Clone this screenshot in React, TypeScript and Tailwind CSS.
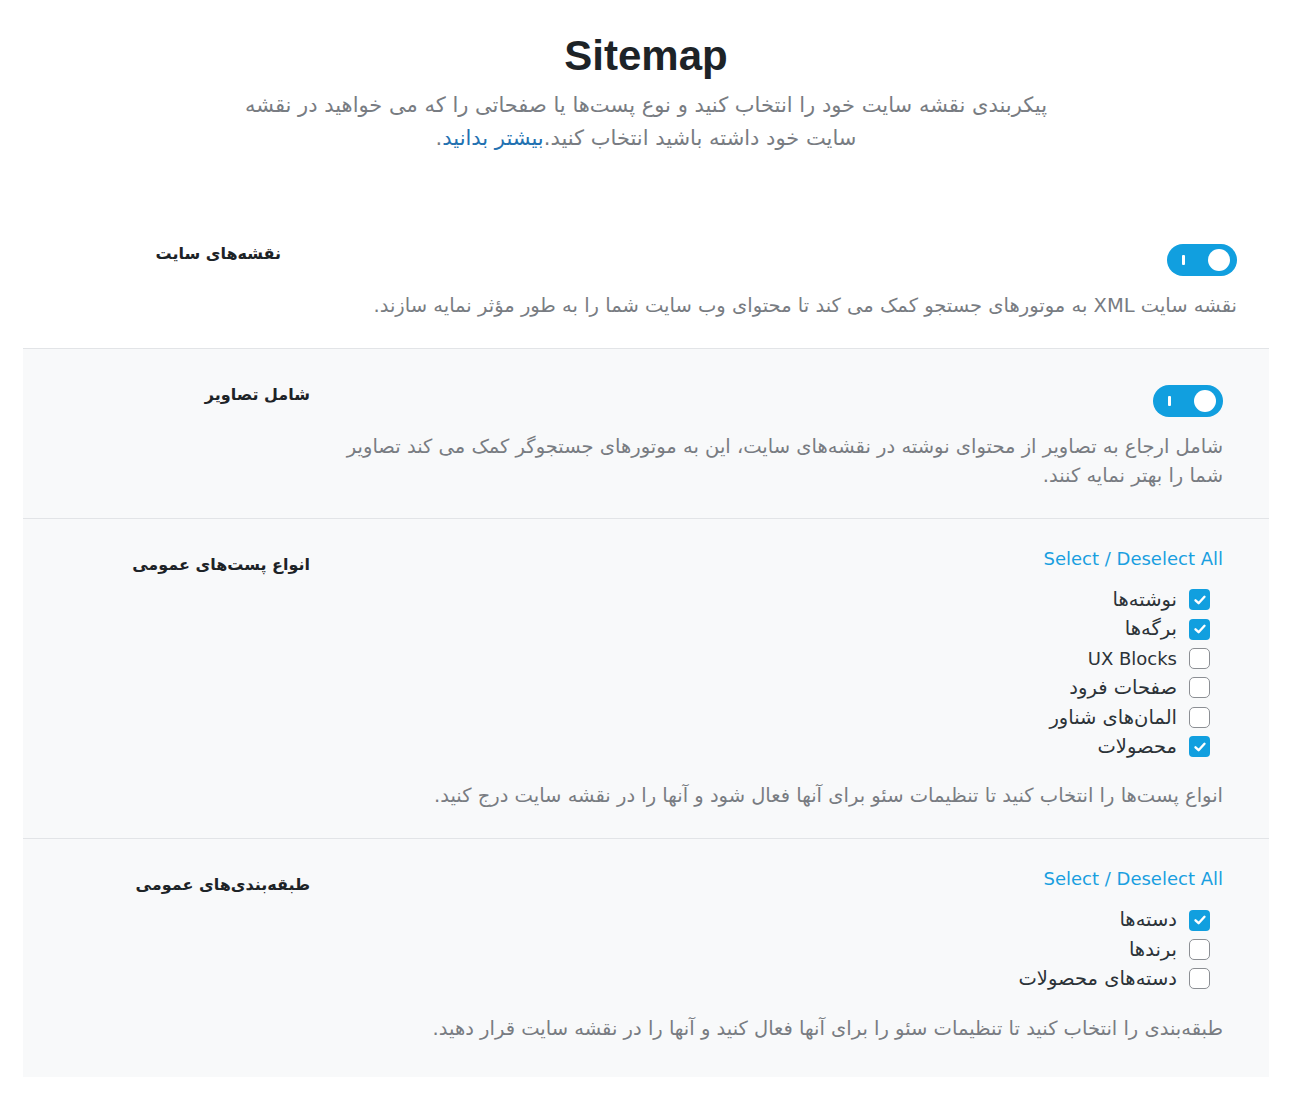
import React from "react";

const FA = "font-['DejaVu_Sans',sans-serif]";

function Toggle() {
  return (
    <div className="relative w-[70px] h-[32px] rounded-full bg-[#119fdf] shrink-0">
      <div className="absolute left-[15px] top-[11px] w-[3px] h-[10px] bg-white rounded-[1px]" />
      <div className="absolute right-[7px] top-[5px] w-[22px] h-[22px] bg-white rounded-full" />
    </div>
  );
}

function Check({ on }: { on: boolean }) {
  return on ? (
    <div className="w-[21px] h-[21px] rounded-[4px] bg-[#119fdf] flex items-center justify-center shrink-0">
      <svg width="14" height="14" viewBox="0 0 14 14" fill="none">
        <path d="M2.5 7.3 L5.6 10.2 L11.5 3.8" stroke="white" strokeWidth="2.4" strokeLinecap="round" strokeLinejoin="round" />
      </svg>
    </div>
  ) : (
    <div className="w-[21px] h-[21px] rounded-[5px] bg-white border border-[#8c8f94] shrink-0" />
  );
}

function CheckList({ items }: { items: [string, boolean][] }) {
  return (
    <div className="flex flex-col mt-[12px] mr-[13px]">
      {items.map(([label, on]) => (
        <div key={label} className="flex items-center gap-[12px] h-[29.4px]">
          <Check on={on} />
          <span className={`${/^[A-Za-z ]+$/.test(label) ? "text-[18px]" : "text-[19.5px]"} text-[#2c3338]`}>{label}</span>
        </div>
      ))}
    </div>
  );
}

function SelectAll() {
  return (
    <div dir="ltr" className="self-start text-[18px] leading-[28px] text-[#1a9fe0]">
      Select / Deselect All
    </div>
  );
}

const DESC = "text-[19.5px] leading-[29px] text-[#787c82]";
const HEAD = "shrink-0 pt-[34px] text-right text-[16px] leading-[24px] font-bold text-[#1d2327]";

export default function App() {
  return (
    <div className={`w-[1292px] min-h-[1114px] bg-white ${FA}`}>
      <div className="pt-[30px] flex flex-col items-center">
        <h1 className="text-[42px] leading-[52px] font-bold text-[#1d2327] font-['Liberation_Sans',sans-serif]">Sitemap</h1>
        <p dir="rtl" className="mt-[7px] w-[830px] text-center text-[21px] leading-[33px] text-[#787c82]">
          پیکربندی نقشه سایت خود را انتخاب کنید و نوع پست‌ها یا صفحاتی را که می خواهید در نقشه سایت خود داشته باشید انتخاب کنید.
          <a className="text-[#2271b1]">بیشتر بدانید</a>.
        </p>
      </div>

      <div className="mt-[53px] mx-[23px] w-[1246px]">
        {/* Section 1 */}
        <div className="flex border-b border-[#e2e4e7] pr-[32px] pb-[28px]">
          <div dir="rtl" className={`w-[258px] ${HEAD}`}>
            نقشه‌های سایت
          </div>
          <div dir="rtl" className="flex-1 pt-[36px] flex flex-col items-start">
            <Toggle />
            <p className={`mt-[15px] ${DESC}`}>
              نقشه سایت XML به موتورهای جستجو کمک می کند تا محتوای وب سایت شما را به طور مؤثر نمایه سازند.
            </p>
          </div>
        </div>

        {/* Section 2 */}
        <div className="flex bg-[#f8f9fa] border-b border-[#e2e4e7] pr-[46px] pb-[28px]">
          <div dir="rtl" className={`w-[287px] ${HEAD}`}>
            شامل تصاویر
          </div>
          <div dir="rtl" className="flex-1 ml-[20px] pt-[36px] flex flex-col items-start">
            <Toggle />
            <p className={`mt-[15px] ${DESC}`}>
              شامل ارجاع به تصاویر از محتوای نوشته در نقشه‌های سایت، این به موتورهای جستجوگر کمک می کند تصاویر شما را بهتر نمایه کنند.
            </p>
          </div>
        </div>

        {/* Section 3 */}
        <div className="flex bg-[#f8f9fa] border-b border-[#e2e4e7] pr-[46px] pb-[28px]">
          <div dir="rtl" className={`w-[287px] ${HEAD}`}>
            انواع پست‌های عمومی
          </div>
          <div dir="rtl" className="flex-1 ml-[20px] pt-[26px] flex flex-col items-start">
            <SelectAll />
            <CheckList
              items={[
                ["نوشته‌ها", true],
                ["برگه‌ها", true],
                ["UX Blocks", false],
                ["صفحات فرود", false],
                ["المان‌های شناور", false],
                ["محصولات", true],
              ]}
            />
            <p className={`mt-[20px] ${DESC}`}>
              انواع پست‌ها را انتخاب کنید تا تنظیمات سئو برای آنها فعال شود و آنها را در نقشه سایت درج کنید.
            </p>
          </div>
        </div>

        {/* Section 4 */}
        <div className="flex bg-[#f8f9fa] pr-[46px] pb-[34px]">
          <div dir="rtl" className={`w-[287px] ${HEAD}`}>
            طبقه‌بندی‌های عمومی
          </div>
          <div dir="rtl" className="flex-1 ml-[20px] pt-[26px] flex flex-col items-start">
            <SelectAll />
            <CheckList
              items={[
                ["دسته‌ها", true],
                ["برندها", false],
                ["دسته‌های محصولات", false],
              ]}
            />
            <p className={`mt-[20px] ${DESC}`}>
              طبقه‌بندی را انتخاب کنید تا تنظیمات سئو را برای آنها فعال کنید و آنها را در نقشه سایت قرار دهید.
            </p>
          </div>
        </div>
      </div>
    </div>
  );
}
